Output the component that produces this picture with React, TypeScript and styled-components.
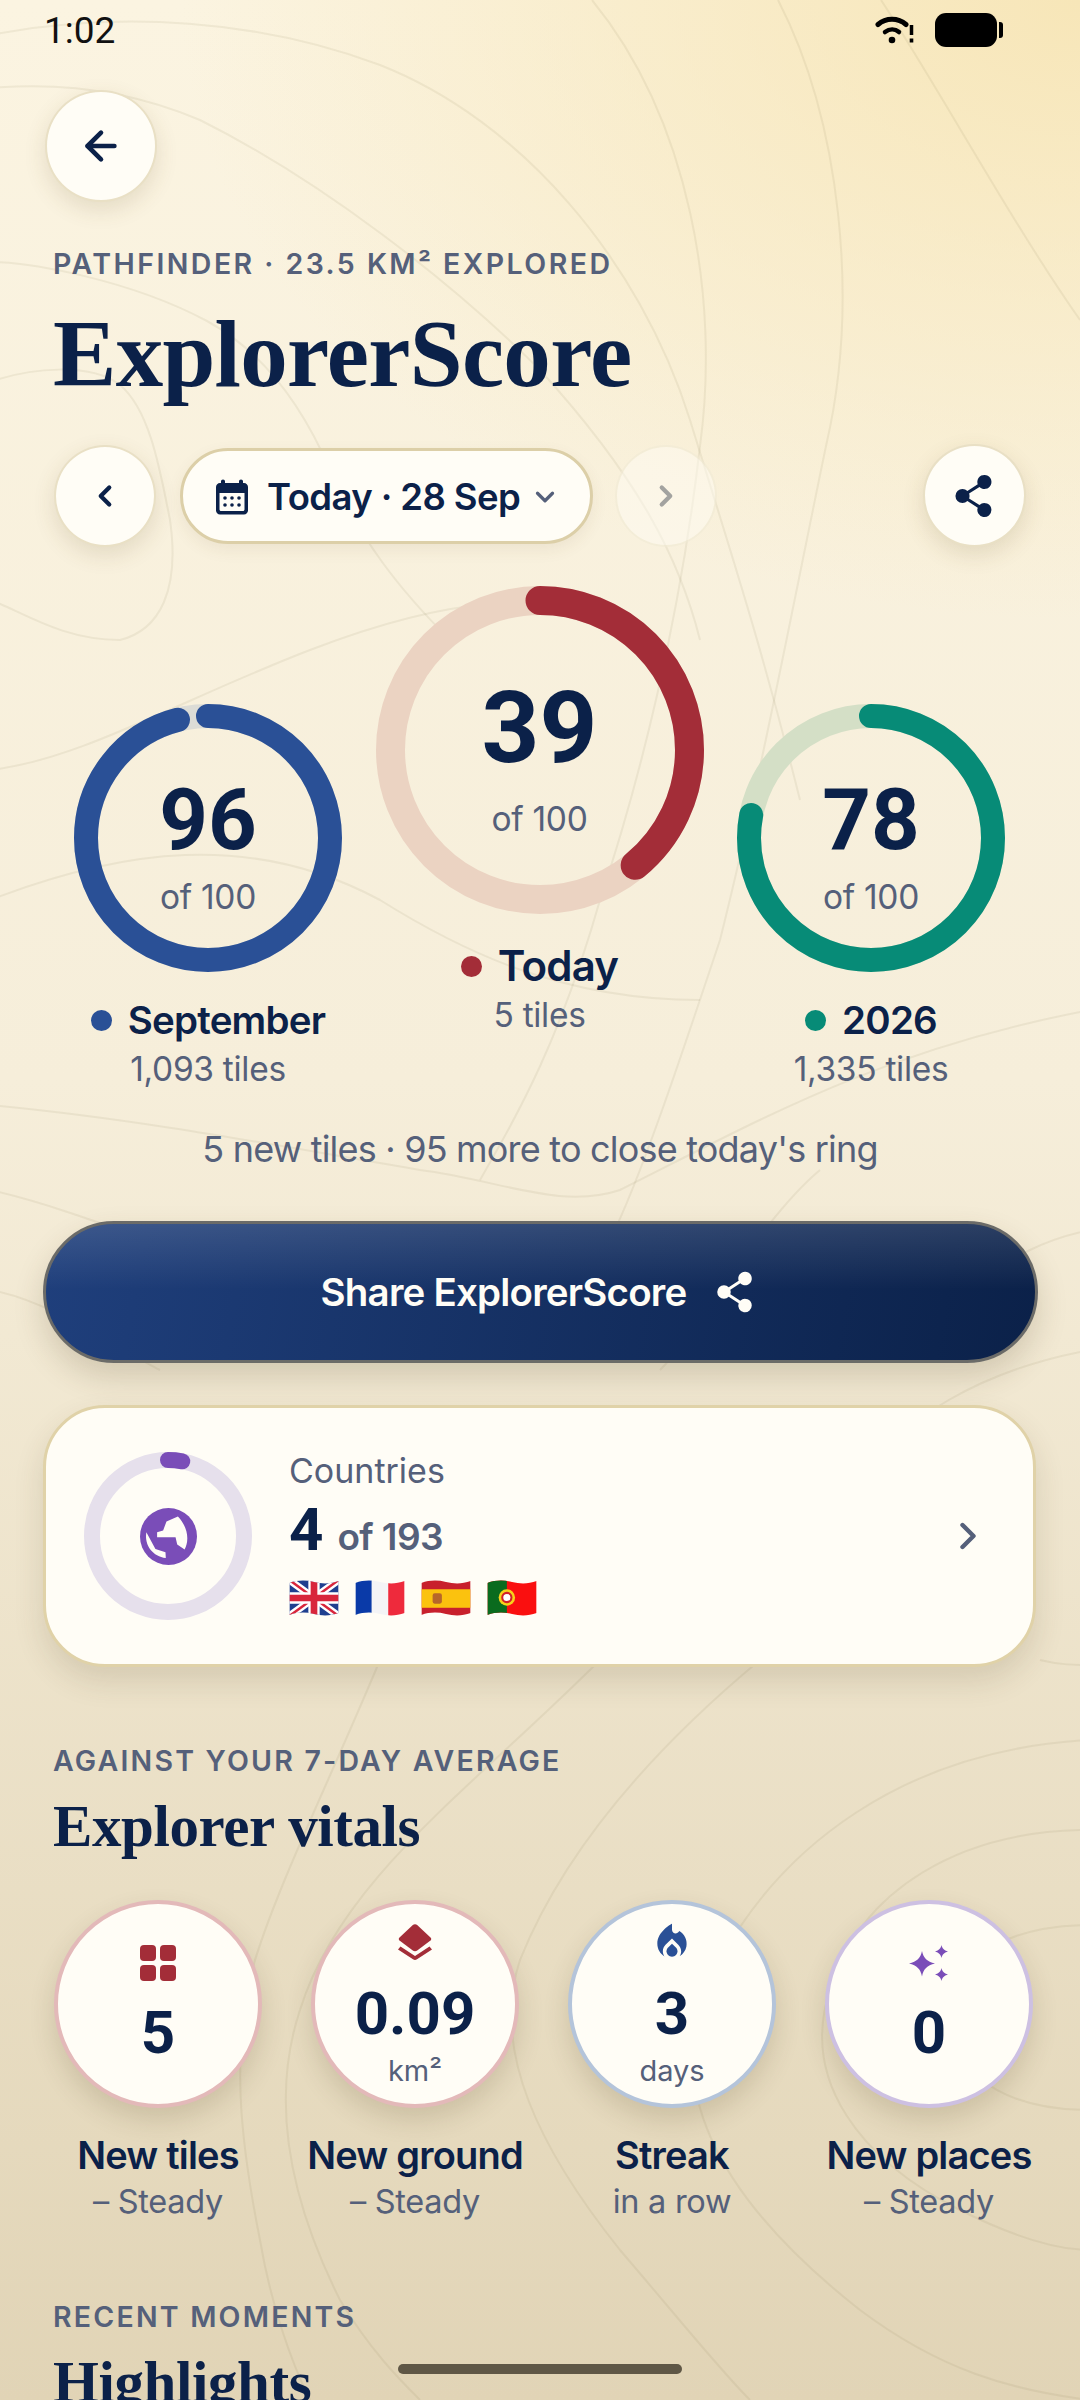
import styled, { createGlobalStyle } from 'styled-components'
import { ArrowLeft, ChevronDown, ChevronLeft, ChevronRight } from 'lucide-react'
import { MdLocalFireDepartment } from 'react-icons/md'
import { PiShareNetworkFill } from 'react-icons/pi'

const navy = '#0b2149'
const slate = '#55607a'
const sans = '"Inter", "Noto Sans", sans-serif'
const serif = '"Liberation Serif", serif'

const GlobalStyle = createGlobalStyle`
  html, body { margin: 0; padding: 0; }
  body { font-family: ${sans}; color: ${navy}; }
  * { box-sizing: border-box; }
`

const Page = styled.div`
  position: relative;
  width: 1080px;
  height: 2400px;
  overflow: hidden;
  background:
    radial-gradient(900px 620px at 100% 0, #f7e6b8 0%, rgba(247, 230, 184, 0) 100%),
    linear-gradient(180deg, #fbf4e1 0%, #f6eeda 45%, #e1d4b6 100%);
`

const Contours = styled.svg`
  position: absolute;
  inset: 0;
  fill: none;
  stroke: #7d6a3e;
  stroke-opacity: 0.09;
  stroke-width: 2;
`

const Content = styled.div`
  position: relative;
  display: flex;
  flex-direction: column;
`

const StatusBar = styled.div`
  display: flex;
  justify-content: space-between;
  align-items: center;
  height: 60px;
  padding: 0 77px 0 44px;
`

const Clock = styled.span`
  font-family: Roboto, sans-serif;
  font-size: 37px;
  color: #111;
`

const StatusIcons = styled.div`
  display: flex;
  align-items: center;
  gap: 20px;
`

const Battery = styled.div`
  position: relative;
  width: 62px;
  height: 34px;
  border-radius: 11px;
  background: #000;
  margin-right: 6px;
  &::after {
    content: '';
    position: absolute;
    right: -6px;
    top: 9px;
    width: 4px;
    height: 16px;
    border-radius: 0 3px 3px 0;
    background: #000;
  }
`

const RoundButton = styled.div<{ $size: number; $faded?: boolean }>`
  width: ${p => p.$size}px;
  height: ${p => p.$size}px;
  flex: none;
  display: flex;
  align-items: center;
  justify-content: center;
  border-radius: 50%;
  color: ${p => (p.$faded ? '#a3a3a0' : navy)};
  background: ${p => (p.$faded ? 'rgba(255, 253, 246, 0.45)' : '#fffdf6')};
  border: 2px solid ${p => (p.$faded ? 'rgba(226, 214, 180, 0.3)' : 'rgba(226, 214, 180, 0.75)')};
  box-shadow: ${p => (p.$faded ? 'none' : '0 8px 22px rgba(96, 78, 36, 0.14)')};
`

const BackSlot = styled.div`
  padding: 30px 0 0 45px;
`

const Eyebrow = styled.div<{ $top: number; $tracking?: number }>`
  margin: ${p => p.$top}px 0 0 53px;
  font-size: 28.5px;
  line-height: 34px;
  font-weight: 600;
  letter-spacing: ${p => p.$tracking ?? 2.45}px;
  color: ${slate};
`

const Title = styled.h1`
  margin: 17px 0 0 53px;
  font-family: ${serif};
  font-size: 95px;
  line-height: 112px;
  font-weight: 700;
  letter-spacing: -0.7px;
  color: ${navy};
`

const NavRow = styled.div`
  display: flex;
  align-items: center;
  margin: 34px 54px 0 54px;
`

const DatePill = styled.div`
  display: flex;
  align-items: center;
  width: 413px;
  height: 96px;
  margin: 0 22px 0 24px;
  padding: 2px 0 0 33px;
  border-radius: 48px;
  background: #fffdf6;
  border: 3px solid #dccfa8;
  font-size: 36.500px;
  font-weight: 600;
  letter-spacing: -0.6px;
  color: ${navy};
  box-shadow: 0 6px 16px rgba(96, 78, 36, 0.08);
  svg:first-child { margin-right: 19px; }
  svg:last-child { margin-left: 10px; }
`

const Spacer = styled.div`
  flex: 1;
`

const RingsRow = styled.div`
  display: grid;
  grid-template-columns: 268px 328px 268px;
  justify-content: space-between;
  margin: 39px 75px 0 74px;
  align-items: start;
`

const RingColumn = styled.div<{ $drop: number }>`
  margin-top: ${p => p.$drop}px;
  display: flex;
  flex-direction: column;
  align-items: center;
`

const RingFrame = styled.div<{ $size: number }>`
  position: relative;
  width: ${p => p.$size}px;
  height: ${p => p.$size}px;
  svg { display: block; }
`

const RingCenter = styled.div<{ $lift?: number }>`
  position: absolute;
  inset: 0;
  padding-top: ${p => p.$lift ?? 0}px;
  display: flex;
  flex-direction: column;
  align-items: center;
  justify-content: center;
`

const RingValue = styled.div<{ $big?: boolean }>`
  font-family: Roboto, sans-serif;
  font-weight: 700;
  font-size: ${p => (p.$big ? 101 : 85)}px;
  line-height: ${p => (p.$big ? 104 : 86)}px;
  margin-top: ${p => (p.$big ? -2 : 0)}px;
  color: ${navy};
`

const RingUnit = styled.div<{ $big?: boolean }>`
  margin-top: ${p => (p.$big ? 20 : 15)}px;
  font-size: 33.500px;
  line-height: 38px;
  color: ${slate};
  letter-spacing: -0.3px;
`

const RingName = styled.div<{ $big?: boolean }>`
  display: flex;
  align-items: center;
  gap: 16px;
  margin-top: ${p => (p.$big ? 29 : 25)}px;
  font-size: ${p => (p.$big ? 42 : 38.500)}px;
  line-height: 46px;
  font-weight: 600;
  letter-spacing: -0.8px;
  color: ${navy};
`

const Dot = styled.span<{ $color: string; $size: number }>`
  width: ${p => p.$size}px;
  height: ${p => p.$size}px;
  border-radius: 50%;
  background: ${p => p.$color};
`

const RingTiles = styled.div`
  margin-top: 4px;
  font-size: 33.500px;
  line-height: 44px;
  color: ${slate};
  letter-spacing: -0.3px;
`

const Note = styled.div`
  margin-top: 35px;
  text-align: center;
  font-size: 36px;
  line-height: 46px;
  letter-spacing: -0.8px;
  color: ${slate};
`

const ShareButton = styled.div`
  display: flex;
  align-items: center;
  justify-content: center;
  gap: 26px;
  height: 142px;
  margin: 49px 42px 0 43px;
  border-radius: 71px;
  border: 3px solid #6b6b68;
  background:
    linear-gradient(180deg, rgba(255, 255, 255, 0.13) 0%, rgba(255, 255, 255, 0) 48%),
    linear-gradient(100deg, #1f3f7c 0%, #0b2149 100%);
  box-shadow: 0 14px 30px rgba(70, 56, 26, 0.18);
  color: #fffdf6;
  font-size: 38.500px;
  font-weight: 600;
  letter-spacing: -0.8px;
`

const CountryCard = styled.div`
  display: flex;
  align-items: center;
  height: 262px;
  margin: 42px 44px 0 43px;
  padding: 0 43px 0 38px;
  border-radius: 62px;
  background: #fffdf6;
  border: 3px solid #e0d2a8;
  box-shadow: 0 14px 30px rgba(70, 56, 26, 0.14);
`

const CardBody = styled.div`
  flex: 1;
  margin-left: 37px;
  padding-bottom: 5px;
  display: flex;
  flex-direction: column;
`

const CardLabel = styled.div`
  font-size: 34px;
  line-height: 40px;
  color: ${slate};
`

const CountLine = styled.div`
  display: flex;
  align-items: baseline;
  gap: 14px;
  margin-top: 10px;
  line-height: 58px;
`

const CountValue = styled.span`
  font-family: Roboto, sans-serif;
  font-weight: 700;
  font-size: 60px;
  color: ${navy};
`

const CountOf = styled.span`
  font-size: 37px;
  font-weight: 600;
  letter-spacing: -0.6px;
  color: ${slate};
`

const Flags = styled.div`
  display: flex;
  gap: 16px;
  margin-top: 14px;
`

const SectionTitle = styled.h2`
  margin: 12px 0 0 53px;
  font-family: ${serif};
  font-size: 59px;
  line-height: 72px;
  font-weight: 700;
  letter-spacing: -0.4px;
  color: ${navy};
`

const Vitals = styled.div`
  display: grid;
  grid-template-columns: repeat(4, 208px);
  justify-content: space-between;
  margin: 38px 47px 0 54px;
`

const Vital = styled.div`
  display: flex;
  flex-direction: column;
  align-items: center;
`

const VitalCircle = styled.div<{ $ring: string }>`
  width: 208px;
  height: 208px;
  display: flex;
  flex-direction: column;
  align-items: center;
  border-radius: 50%;
  background: #fffdf6;
  border: 4px solid ${p => p.$ring};
  box-shadow: 0 12px 26px rgba(70, 56, 26, 0.16);
`

const VitalIcon = styled.div<{ $hasUnit?: boolean; $color: string }>`
  height: 46px;
  margin-top: ${p => (p.$hasUnit ? 15 : 36)}px;
  display: flex;
  align-items: center;
  justify-content: center;
  color: ${p => p.$color};
`

const VitalValue = styled.div<{ $hasUnit?: boolean }>`
  font-family: Roboto, sans-serif;
  font-weight: 700;
  font-size: 60px;
  line-height: 60px;
  margin-top: ${p => (p.$hasUnit ? 19 : 17)}px;
  color: ${navy};
`

const VitalUnit = styled.div`
  margin-top: 10px;
  font-size: 29px;
  line-height: 34px;
  color: ${slate};
`

const VitalName = styled.div`
  margin-top: 25px;
  white-space: nowrap;
  font-size: 38px;
  line-height: 44px;
  font-weight: 600;
  letter-spacing: -0.8px;
  color: ${navy};
`

const VitalSub = styled.div`
  margin-top: 4px;
  white-space: nowrap;
  font-size: 32.500px;
  line-height: 42px;
  letter-spacing: -0.3px;
  color: ${slate};
`

const HomeBar = styled.div`
  position: absolute;
  left: 398px;
  bottom: 26px;
  width: 284px;
  height: 10px;
  border-radius: 5px;
  background: #5f5746;
`

const contourPaths = [
  'M-10 35C120 10 260 20 380 65 520 120 640 260 690 420 730 550 760 640 800 800',
  'M-10 88C60 82 130 90 200 120 320 180 450 280 540 370 640 480 680 560 700 640',
  'M-10 262C30 262 130 280 207 321 260 350 300 400 330 470 360 540 400 590 450 640',
  'M-10 382C30 368 90 362 120 385 150 410 160 470 170 520 180 590 160 630 120 640 60 640 20 610 -10 600',
  'M592 0C690 120 720 300 700 446 680 620 640 780 600 900 560 1040 520 1110 480 1180',
  'M778 0C840 120 860 300 826 446 790 620 760 780 720 940 680 1060 640 1180 610 1240',
  'M881 0C940 90 1010 220 1080 320',
  'M-10 770C80 760 180 700 310 650 440 600 560 580 640 640',
  'M-10 900C120 850 250 830 380 900 460 950 560 1000 700 1000',
  'M-10 1105C150 1120 300 1150 420 1170 500 1180 560 1210 620 1190 760 1120 880 1050 1090 1010',
  'M-10 1190C80 1210 190 1260 300 1290',
  'M-10 1290C50 1300 120 1350 160 1370',
  'M820 1170C760 1220 700 1330 660 1370',
  'M1090 1230C1040 1240 1010 1260 1000 1270',
  'M1090 1350C980 1370 900 1420 860 1480',
  'M1040 1660C1060 1665 1075 1665 1090 1665',
  'M1090 1740C900 1750 780 1850 720 1960 650 2080 720 2200 860 2310 940 2370 1010 2390 1090 2400',
  'M1090 1830C960 1830 860 1890 830 1990 800 2080 860 2160 960 2210 1020 2240 1060 2250 1090 2250',
  'M1090 1925C1020 1925 960 1950 950 2000 940 2060 990 2110 1090 2110',
  'M600 1660C470 1790 340 1880 300 2010 270 2100 290 2200 340 2300 370 2350 400 2380 420 2400',
  'M380 1660C330 1780 280 1880 255 1960 230 2050 240 2140 260 2240 270 2300 290 2360 310 2400',
  'M760 1660C640 1760 560 1860 520 1960 490 2050 540 2150 620 2250 680 2320 720 2370 750 2400',
]

const Ring = ({ size, stroke, track, color, pct, lift, children }: {
  size: number
  stroke: number
  track: string
  color: string
  pct: number
  lift?: number
  children?: React.ReactNode
}) => {
  const r = (size - stroke) / 2
  const c = 2 * Math.PI * r
  return (
    <RingFrame $size={size}>
      <svg width={size} height={size} viewBox={`0 0 ${size} ${size}`}>
        <circle cx={size / 2} cy={size / 2} r={r} fill="none" stroke={track} strokeWidth={stroke} />
        <circle
          cx={size / 2}
          cy={size / 2}
          r={r}
          fill="none"
          stroke={color}
          strokeWidth={stroke}
          strokeLinecap="round"
          strokeDasharray={`${(c * pct) / 100} ${c}`}
          transform={`rotate(-90 ${size / 2} ${size / 2})`}
        />
      </svg>
      <RingCenter $lift={lift}>{children}</RingCenter>
    </RingFrame>
  )
}

const WifiAlert = () => (
  <svg width="40" height="30" viewBox="0 0 40 30" fill="none" stroke="#000" strokeLinecap="round">
    <path d="M3 9.5C11 2.5 23 2.5 31 9.5" strokeWidth="5" />
    <path d="M10 17C14.500 13.500 20 13.500 24 17" strokeWidth="4.500" />
    <circle cx="17" cy="25" r="3.300" fill="#000" stroke="none" />
    <path d="M36.500 10V20" strokeWidth="3.500" strokeLinecap="butt" />
    <rect x="34.700" y="23.500" width="3.600" height="4" fill="#000" stroke="none" />
  </svg>
)

const CalendarIcon = () => (
  <svg width="32" height="36" viewBox="0 0 32 36">
    <path
      fill={navy}
      fillRule="evenodd"
      d="M7 0.500C8.200 0.500 9 1.300 9 2.500V4H23V2.500C23 1.300 23.800 0.500 25 0.500S27 1.300 27 2.500V4H28C30.200 4 32 5.800 32 8V31.500C32 33.700 30.200 35.500 28 35.500H4C1.800 35.500 0 33.700 0 31.500V8C0 5.800 1.800 4 4 4H5V2.500C5 1.300 5.800 0.500 7 0.500ZM3.500 14V30.500C3.500 31.300 4.200 32 5 32H27C27.800 32 28.500 31.300 28.500 30.500V14Z"
    />
    {[9, 16, 23].map(x => [19, 26].map(y => (
      <circle key={`${x}-${y}`} cx={x} cy={y} r="1.800" fill={navy} />
    )))}
  </svg>
)

const GlobeIcon = () => (
  <svg width="57" height="57" viewBox="0 0 170 170">
    <circle cx="85" cy="85" r="85" fill="#7a4db8" />
    <path
      fill="#fffdf6"
      d="M113 25L79 40 69 67 51 72 51 87 106 87 111 109 133 124C146 100 146 60 113 25Z"
    />
    <path fill="#fffdf6" d="M19 72L46 122 76 132 77 149C40 145 12 112 19 72Z" />
  </svg>
)

// flags are waved a little, like the emoji they stand in for
const wave = 'M0 3C8 0 16 0 24 2S40 4 48 1V32C40 35 32 35 24 33S8 31 0 34Z'

const Flag = ({ id, children }: { id: string; children: React.ReactNode }) => (
  <svg width="50" height="36" viewBox="0 0 48 35">
    <clipPath id={id}>
      <path d={wave} />
    </clipPath>
    <g clipPath={`url(#${id})`}>{children}</g>
  </svg>
)

const TileGrid = () => (
  <svg width="36" height="36" viewBox="0 0 36 36" fill="currentColor">
    <rect x="0" y="0" width="16" height="16" rx="4" />
    <rect x="20" y="0" width="16" height="16" rx="4" />
    <rect x="0" y="20" width="16" height="16" rx="4" />
    <rect x="20" y="20" width="16" height="16" rx="4" />
  </svg>
)

const LayersIcon = () => (
  <svg width="34" height="36" viewBox="0 0 34 36" fill="currentColor">
    <path d="M14.800 1L1.500 13.500C0.500 14.500 0.500 15.500 1.500 16.500L14.800 26.500C16 27.400 18 27.400 19.200 26.500L32.500 16.500C33.500 15.500 33.500 14.500 32.500 13.500L19.200 1C18 0 16 0 14.800 1Z" />
    <path d="M2.500 22.500L0 25.500 15 35.300C16.300 36.100 17.700 36.100 19 35.300L34 25.500 31.500 22.500 17 32Z" />
  </svg>
)

const Sparkles = () => (
  <svg width="40" height="36" viewBox="0 0 40 36" fill="currentColor">
    <path d="M13 6C14.500 13 18 16.500 26 18.500 18 20.500 14.500 24 13 31.500 11.500 24 8 20.500 0 18.500 8 16.500 11.500 13 13 6Z" />
    <path d="M32.500 0C33.200 3.500 35 5.300 39 6.500 35 7.700 33.200 9.500 32.500 13 31.800 9.500 30 7.700 26 6.500 30 5.300 31.800 3.500 32.500 0Z" />
    <path d="M32.500 23C33.200 26.500 35 28.300 39 29.500 35 30.700 33.200 32.500 32.500 36 31.800 32.500 30 30.700 26 29.500 30 28.300 31.800 26.500 32.500 23Z" />
  </svg>
)

const vitals = [
  { name: 'New tiles', sub: '– Steady', value: '5', ring: '#e3b9b9', color: '#a32d38', icon: <TileGrid /> },
  { name: 'New ground', sub: '– Steady', value: '0.09', unit: 'km²', ring: '#e3b9b9', color: '#a32d38', icon: <LayersIcon /> },
  { name: 'Streak', sub: 'in a row', value: '3', unit: 'days', ring: '#b4c4da', color: '#2a5096', icon: <MdLocalFireDepartment size={44} /> },
  { name: 'New places', sub: '– Steady', value: '0', ring: '#cdc0e2', color: '#7a4db8', icon: <Sparkles /> },
]

export default function App() {
  return (
    <Page>
      <GlobalStyle />
      <Contours width="1080" height="2400" viewBox="0 0 1080 2400">
        {contourPaths.map(d => <path key={d} d={d} />)}
      </Contours>
      <Content>
        <StatusBar>
          <Clock>1:02</Clock>
          <StatusIcons>
            <WifiAlert />
            <Battery />
          </StatusIcons>
        </StatusBar>
        <BackSlot>
          <RoundButton $size={112}>
            <ArrowLeft size={46} strokeWidth={2.4} />
          </RoundButton>
        </BackSlot>
        <Eyebrow $top={45}>PATHFINDER · 23.5 KM² EXPLORED</Eyebrow>
        <Title>ExplorerScore</Title>
        <NavRow>
          <RoundButton $size={102}>
            <ChevronLeft size={34} strokeWidth={3} />
          </RoundButton>
          <DatePill>
            <CalendarIcon />
            Today · 28 Sep
            <ChevronDown size={30} strokeWidth={2.6} color={slate} />
          </DatePill>
          <RoundButton $size={102} $faded>
            <ChevronRight size={34} strokeWidth={3} />
          </RoundButton>
          <Spacer />
          <RoundButton $size={103}>
            <PiShareNetworkFill size={50} />
          </RoundButton>
        </NavRow>
        <RingsRow>
          <RingColumn $drop={118}>
            <Ring size={268} stroke={24} track="#dcdcd6" color="#2a5096" pct={96} lift={16}>
              <RingValue>96</RingValue>
              <RingUnit>of 100</RingUnit>
            </Ring>
            <RingName><Dot $color="#2a5096" $size={21} />September</RingName>
            <RingTiles>1,093 tiles</RingTiles>
          </RingColumn>
          <RingColumn $drop={0}>
            <Ring size={328} stroke={29} track="#ebd3c2" color="#a32d38" pct={39} lift={16}>
              <RingValue $big>39</RingValue>
              <RingUnit $big>of 100</RingUnit>
            </Ring>
            <RingName $big><Dot $color="#a32d38" $size={21} />Today</RingName>
            <RingTiles>5 tiles</RingTiles>
          </RingColumn>
          <RingColumn $drop={118}>
            <Ring size={268} stroke={24} track="#d4dfc6" color="#078b77" pct={78} lift={16}>
              <RingValue>78</RingValue>
              <RingUnit>of 100</RingUnit>
            </Ring>
            <RingName><Dot $color="#078b77" $size={21} />2026</RingName>
            <RingTiles>1,335 tiles</RingTiles>
          </RingColumn>
        </RingsRow>
        <Note>5 new tiles · 95 more to close today's ring</Note>
        <ShareButton>
          Share ExplorerScore
          <PiShareNetworkFill size={48} />
        </ShareButton>
        <CountryCard>
          <Ring size={168} stroke={16} track="#e6e0ec" color="#7a4db8" pct={3}>
            <GlobeIcon />
          </Ring>
          <CardBody>
            <CardLabel>Countries</CardLabel>
            <CountLine>
              <CountValue>4</CountValue>
              <CountOf>of 193</CountOf>
            </CountLine>
            <Flags>
              <Flag id="gb">
                <rect width="48" height="35" fill="#1f3f8f" />
                <path d="M0 0L48 35M48 0L0 35" stroke="#fff" strokeWidth="7" />
                <path d="M0 0L48 35M48 0L0 35" stroke="#d8263c" strokeWidth="2.500" />
                <path d="M24 0V35M0 17.500H48" stroke="#fff" strokeWidth="11" />
                <path d="M24 0V35M0 17.500H48" stroke="#d8263c" strokeWidth="6.500" />
              </Flag>
              <Flag id="fr">
                <rect width="16" height="35" fill="#0a3aa8" />
                <rect x="16" width="16" height="35" fill="#f4f4f6" />
                <rect x="32" width="16" height="35" fill="#ee2a3c" />
              </Flag>
              <Flag id="es">
                <rect width="48" height="35" fill="#c8202c" />
                <rect y="9" width="48" height="18" fill="#fbc20e" />
                <rect x="11" y="13" width="9" height="10" rx="2" fill="#b7662a" />
              </Flag>
              <Flag id="pt">
                <rect width="48" height="35" fill="#fa0f0f" />
                <rect width="19" height="35" fill="#0a6b1e" />
                <circle cx="19" cy="17" r="8" fill="#f7d21a" />
                <circle cx="19" cy="17" r="4.500" fill="#fff" stroke="#d2202a" strokeWidth="2" />
              </Flag>
            </Flags>
          </CardBody>
          <ChevronRight size={44} strokeWidth={2.4} color={slate} />
        </CountryCard>
        <Eyebrow $top={77} $tracking={2.2}>AGAINST YOUR 7-DAY AVERAGE</Eyebrow>
        <SectionTitle>Explorer vitals</SectionTitle>
        <Vitals>
          {vitals.map(v => (
            <Vital key={v.name}>
              <VitalCircle $ring={v.ring}>
                <VitalIcon $hasUnit={!!v.unit} $color={v.color}>{v.icon}</VitalIcon>
                <VitalValue $hasUnit={!!v.unit}>{v.value}</VitalValue>
                {v.unit && <VitalUnit>{v.unit}</VitalUnit>}
              </VitalCircle>
              <VitalName>{v.name}</VitalName>
              <VitalSub>{v.sub}</VitalSub>
            </Vital>
          ))}
        </Vitals>
        <Eyebrow $top={77} $tracking={2.2}>RECENT MOMENTS</Eyebrow>
        <SectionTitle>Highlights</SectionTitle>
      </Content>
      <HomeBar />
    </Page>
  )
}
